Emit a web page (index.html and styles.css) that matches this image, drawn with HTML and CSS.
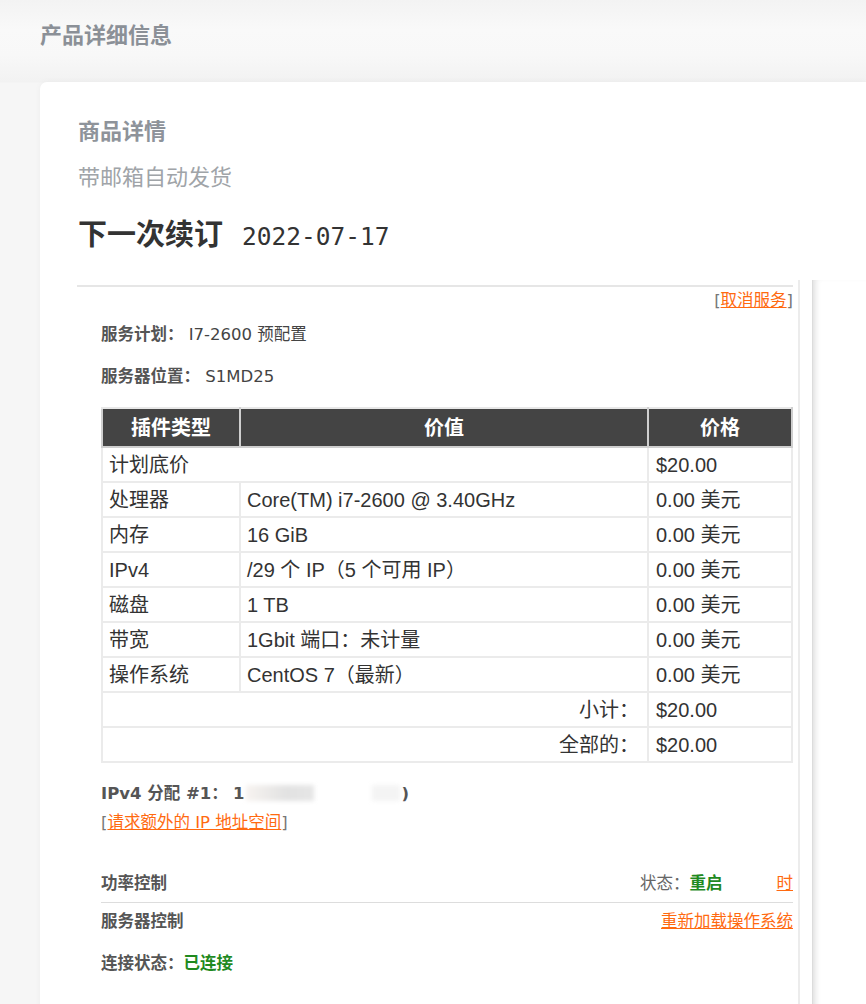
FILE: index.html
```html
<!DOCTYPE html>
<html lang="zh-CN">
<head>
    <meta charset="UTF-8">
    <meta name="viewport" content="width=device-width, initial-scale=1.0">
    <title>产品详细信息</title>
    <link rel="stylesheet" href="styles.css">
</head>
<body>
    <h2 class="page-title">产品详细信息</h2>
    <div class="card">
        <h3 class="card-title">商品详情</h3>
        <p class="card-sub">带邮箱自动发货</p>
        <h1 class="renew">下一次续订<span class="renew-date">2022-07-17</span></h1>

        <div class="frame">
            <div class="frame-body">
                <div class="topline"></div>
                <div class="cancel">[<a href="#">取消服务</a>]</div>
                <div class="info plan"><b>服务计划：</b> <span class="val">I7-2600 预配置</span></div>
                <div class="info location"><b>服务器位置：</b> <span class="val">S1MD25</span></div>

                <table class="addons">
                    <thead>
                        <tr>
                            <th class="c1">插件类型</th>
                            <th class="c2">价值</th>
                            <th class="c3">价格</th>
                        </tr>
                    </thead>
                    <tbody>
                        <tr><td colspan="2">计划底价</td><td>$20.00</td></tr>
                        <tr><td>处理器</td><td>Core(TM) i7-2600 @ 3.40GHz</td><td>0.00 美元</td></tr>
                        <tr><td>内存</td><td>16 GiB</td><td>0.00 美元</td></tr>
                        <tr><td>IPv4</td><td>/29 个 IP（5 个可用 IP）</td><td>0.00 美元</td></tr>
                        <tr><td>磁盘</td><td>1 TB</td><td>0.00 美元</td></tr>
                        <tr><td>带宽</td><td>1Gbit 端口：未计量</td><td>0.00 美元</td></tr>
                        <tr><td>操作系统</td><td>CentOS 7（最新）</td><td>0.00 美元</td></tr>
                        <tr><td colspan="2" class="right">小计：</td><td>$20.00</td></tr>
                        <tr><td colspan="2" class="right">全部的：</td><td>$20.00</td></tr>
                    </tbody>
                </table>

                <div class="info ip"><b>IPv4 分配 #1：</b> <b class="ipaddr">1<span class="blur"></span><span class="blur light"></span>)</b></div>
                <div class="request">[<a href="#">请求额外的 IP 地址空间</a>]</div>

                <div class="ctrl power">
                    <b>功率控制</b>
                    <span class="status">状态：<b class="ok">重启</b><a href="#">时</a></span>
                </div>
                <div class="ctrl server">
                    <b>服务器控制</b>
                    <a href="#">重新加载操作系统</a>
                </div>
                <div class="info conn"><b>连接状态：</b><b class="ok">已连接</b></div>
            </div>
            <div class="frame-side"></div>
        </div>
    </div>
</body>
</html>
```

FILE: styles.css
```css
body {
    margin: 0;
    min-height: 1004px;
    font-family: "Noto Sans CJK SC", "Noto Sans", sans-serif;
    background: linear-gradient(#f3f3f3 0, #f9f9f9 30px, #f8f8f8 55px, #f2f2f2 82px, #f6f6f6 83px);
    overflow: hidden;
}
.page-title {
    margin: 0;
    padding: 18px 0 0 40px;
    height: 30px;
    font-size: 22px;
    line-height: 30px;
    font-weight: bold;
    color: #8b9097;
}
.card {
    margin: 34px 0 0 40px;
    padding: 32px 0 0 38px;
    background: #fff;
    border-radius: 7px 0 0 0;
    box-shadow: 0 0 6px rgba(0, 0, 0, 0.04);
}
.card-title {
    margin: 0;
    font-size: 22px;
    line-height: 30px;
    font-weight: bold;
    color: #8e939a;
}
.card-sub {
    margin: 16px 0 0;
    font-size: 22px;
    line-height: 30px;
    color: #a0a4a8;
}
.renew {
    margin: 22px 0 0;
    font-size: 29px;
    line-height: 40px;
    font-weight: bold;
    color: #333;
}
.renew-date {
    margin-left: 19px;
    font-family: "DejaVu Sans Mono", monospace;
    font-size: 24.5px;
    font-weight: normal;
}

/* embedded client-area frame */
.frame {
    display: flex;
    margin: 23px 0 0 -2px;
}
.frame-body {
    width: 692px;
    padding: 5px 5px 40px 25px;
    border-right: 2px solid #ececec;
    font-family: "DejaVu Sans", "Noto Sans CJK SC", sans-serif;
    font-size: 16.5px;
    line-height: 24px;
    color: #555;
}
.frame-side {
    flex: 1;
    margin-left: 12px;
    border-left: 1px solid #dcdcdc;
    box-shadow: inset 6px 0 6px -4px rgba(0, 0, 0, 0.14);
}
.topline {
    margin-left: -24px;
    border-top: 2px solid #e6e6e6;
}
a {
    color: #ff6a10;
}
.cancel {
    margin-top: 2px;
    text-align: right;
    color: #777;
}
.info b {
    color: #555;
}
.val {
    color: #444;
}
.plan {
    margin-top: 10px;
}
.location {
    margin-top: 18px;
}

.addons {
    width: 692px;
    margin-top: 18px;
    border-collapse: collapse;
    font-family: "Liberation Sans", "Noto Sans CJK SC", sans-serif;
    font-size: 20px;
    color: #333;
    border: 2px solid #e8e8e8;
}
.addons th {
    height: 37px;
    padding: 0;
    background: #444;
    color: #fff;
    font-weight: bold;
    text-align: center;
    border: 2px solid #cfcfcf;
    border-top-color: #e8e8e8;
}
.addons .c1 { width: 136px; }
.addons .c3 { width: 142px; }
.addons td {
    height: 33px;
    padding: 0 6px;
    border: 2px solid #ebebeb;
    line-height: 24px;
}
.addons td:last-child {
    padding-left: 7px;
}
.addons td.right {
    text-align: right;
    padding-right: 8px;
}

.ip {
    margin-top: 19px;
}
.ipaddr {
    font-weight: bold;
}
.blur {
    display: inline-block;
    width: 68px;
    height: 16px;
    margin-left: 1px;
    vertical-align: -2px;
    background: linear-gradient(90deg, #f7f3f0, #e2e2e2 60%, #e6e6e6);
    filter: blur(2px);
}
.blur.light {
    width: 28px;
    margin-left: 58px;
    margin-right: 2px;
    background: #f4f4f4;
}
.request {
    margin-top: 5px;
    color: #777;
}
.ctrl {
    display: flex;
    justify-content: space-between;
}
.power {
    margin-top: 37px;
    padding-bottom: 6px;
    border-bottom: 1px solid #dddddd;
}
.server {
    padding-top: 7px;
}
.status {
    color: #666;
}
.status a {
    margin-left: 54px;
}
.ok,
.info .ok {
    color: #1f8a1f;
}
.conn {
    margin-top: 18px;
}
```
